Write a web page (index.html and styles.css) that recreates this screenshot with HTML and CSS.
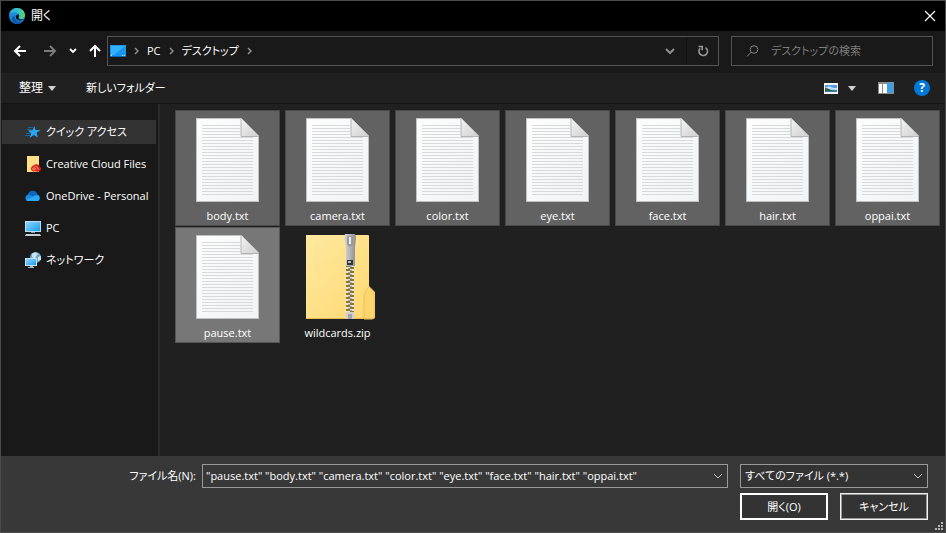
FILE: index.html
```html
<!DOCTYPE html>
<html lang="ja">
<head>
<meta charset="utf-8">
<title>開く</title>
<link rel="stylesheet" href="styles.css">
</head>
<body>

<!-- shared icons -->
<svg class="sprite" aria-hidden="true">
    <defs>
        <linearGradient id="paper" x1="0" y1="0" x2="1" y2="1">
            <stop offset="0" stop-color="#fdfdfd"/><stop offset="1" stop-color="#f1f3f5"/>
        </linearGradient>
        <linearGradient id="fold" x1="0" y1="0" x2="1" y2="1">
            <stop offset="0" stop-color="#f4f4f4"/><stop offset="1" stop-color="#cfcfcf"/>
        </linearGradient>
        <linearGradient id="folder" x1="0" y1="0" x2="1" y2="1">
            <stop offset="0" stop-color="#ffe9a0"/><stop offset="1" stop-color="#fdd870"/>
        </linearGradient>
        <linearGradient id="metal" x1="0" y1="0" x2="1" y2="0">
            <stop offset="0" stop-color="#d8d8d8"/><stop offset="0.5" stop-color="#b4b4b4"/><stop offset="1" stop-color="#8c8c8c"/>
        </linearGradient>
        <linearGradient id="screen" x1="0" y1="0" x2="1" y2="1">
            <stop offset="0" stop-color="#8fd6ff"/><stop offset="1" stop-color="#1b9cf0"/>
        </linearGradient>
        <linearGradient id="edgeBlue" x1="0" y1="0" x2="0" y2="1">
            <stop offset="0" stop-color="#1c9de0"/><stop offset="1" stop-color="#1473c8"/>
        </linearGradient>
        <linearGradient id="edgeTop" x1="0" y1="0" x2="1" y2="0">
            <stop offset="0" stop-color="#2aa8e8"/><stop offset="0.6" stop-color="#35c1c0"/><stop offset="1" stop-color="#62d65a"/>
        </linearGradient>
        <pattern id="ruled" width="3" height="3" patternUnits="userSpaceOnUse" y="7">
            <rect width="3" height="1" fill="#d7d9db"/>
        </pattern>
        <pattern id="teeth" width="8" height="4" patternUnits="userSpaceOnUse" x="40" y="34">
            <rect width="8" height="4" fill="#8a7433"/>
            <path d="M0 0h4v2H0zM4 2h4v2H4z" fill="#e4e4e4"/>
            <path d="M2 1h2v1H2zM4 3h2v1H4z" fill="#a9a9a4"/>
        </pattern>
    </defs>
    <symbol id="textFile" viewBox="0 0 64 85">
        <path d="M0 0h45l18 18v66H0z" fill="#bfc1c3"/>
        <path d="M1 1h44l17 17v65H1z" fill="url(#paper)"/>
        <path d="M6 7h38v12h13v59H6z" fill="url(#ruled)"/>
        <path d="M45 0l18 18H45z" fill="url(#fold)"/>
        <path d="M45 0v18.500h18" fill="none" stroke="#b4b4b4"/>
    </symbol>
    <symbol id="chevronDown" viewBox="0 0 10 6">
        <path d="M1 1l4 4 4-4" fill="none" stroke="currentColor"/>
    </symbol>
    <symbol id="chevronRight" viewBox="0 0 5 8">
        <path d="M1 1l3 3-3 3" fill="none" stroke="#8f8f8f" stroke-width="1.5"/>
    </symbol>
</svg>

<div class="dialog">
    <div class="titleBar">
        <svg class="appIcon" viewBox="0 0 16 16">
            <circle cx="8" cy="8" r="8" fill="url(#edgeBlue)"/>
            <path d="M.2 6.300C1 2.600 4.200 0 8 0c4.600 0 8 3.400 8 7.200 0 2.300-1.600 3.900-3.800 3.900-1.500 0-2.700-.6-2.700-1.400 0-.5.700-.8.700-2C10.200 5.600 8 4.300 5.500 4.300 3 4.300 1.200 5.200.2 6.300z" fill="url(#edgeTop)"/>
            <path d="M5.600 7.500c-.8 4 2.600 6.800 6 6.200 1.200-.2 2.300-.8 3.100-1.500-1.200 2.200-3.600 3.800-6.600 3.800-3.300-.2-5.400-3-4.900-5.600.3-1.400 1.200-2.400 2.400-2.900z" fill="#1257a5"/>
            <path d="M9.500 6.600c-1.700-.1-2.900 1.200-2.600 2.900.3 2 2.700 3.300 5.200 2.800 1.100-.2 2-.6 2.700-1.200-2.400.8-5.300.2-5.300-1.400 0-.5.700-.8.700-2 0-.4-.3-.8-.7-1.100z" fill="#05131f"/>
        </svg>
        <div class="titleText">開く</div>
        <button class="iconBtn closeBtn" aria-label="閉じる">
            <svg width="12" height="12" viewBox="0 0 12 12"><path d="M1 1l10 10M11 1L1 11" stroke="#fff" stroke-width="1.200"/></svg>
        </button>
    </div>

    <div class="navBar">
        <div class="navButtons">
            <button class="iconBtn backBtn" aria-label="戻る">
                <svg width="14" height="12" viewBox="0 0 14 12"><path d="M13 6H2M7 1L2 6l5 5" fill="none" stroke="#fff" stroke-width="2"/></svg>
            </button>
            <button class="iconBtn" aria-label="進む" disabled>
                <svg width="14" height="12" viewBox="0 0 14 12"><path d="M1 6h11M7 1l5 5-5 5" fill="none" stroke="#7c7c7c" stroke-width="2"/></svg>
            </button>
            <button class="iconBtn" aria-label="最近表示した場所">
                <svg width="8" height="6" viewBox="0 0 8 6"><path d="M1 1l3 3 3-3" fill="none" stroke="#fff" stroke-width="1.800"/></svg>
            </button>
            <button class="iconBtn" aria-label="上へ">
                <svg width="12" height="14" viewBox="0 0 12 14"><path d="M6 13V2M1 7l5-5 5 5" fill="none" stroke="#fff" stroke-width="2"/></svg>
            </button>
        </div>
        <div class="addressBar">
            <svg width="16" height="12" viewBox="0 0 16 12"><rect width="16" height="12" fill="#1597f0"/><path d="M1 1h14L4 10H1z" fill="#35b0ff"/><path d="M0 11h16v1H0z" fill="#0768b8"/><path d="M1 10h1v1H1zM12 10h1v1h-1zM14 10h1v1h-1z" fill="#fff"/></svg>
            <svg class="crumbArrow"><use href="#chevronRight"/></svg>
            <a href="#pc">PC</a>
            <svg class="crumbArrow"><use href="#chevronRight"/></svg>
            <a href="#desktop">デスクトップ</a>
            <svg class="crumbArrow"><use href="#chevronRight"/></svg>
            <button class="iconBtn historyBtn" aria-label="以前の場所">
                <svg width="10" height="7" viewBox="0 0 10 7"><path d="M1 1l4 4 4-4" fill="none" stroke="#8f8f8f" stroke-width="2"/></svg>
            </button>
            <button class="iconBtn refreshBtn" aria-label="最新の情報に更新">
                <svg width="12" height="12" viewBox="0 0 12 12"><path d="M8.500 2.600A4.300 4.300 0 1 1 3 3.400" fill="none" stroke="#999" stroke-width="1.600"/><path d="M1.500 1.500h3.700v3.700" fill="none" stroke="#999" stroke-width="1.600"/></svg>
            </button>
        </div>
        <label class="searchBox">
            <svg width="13" height="12" viewBox="0 0 13 12"><circle cx="8" cy="4.500" r="3.800" fill="none" stroke="#858585"/><path d="M5.200 7.200L1 11.500" stroke="#858585"/></svg>
            <input type="text" placeholder="デスクトップの検索" aria-label="デスクトップの検索">
        </label>
    </div>

    <div class="toolBar">
        <button class="toolBtn organizeBtn">整理 <span class="caret"></span></button>
        <button class="toolBtn">新しいフォルダー</button>
        <div class="toolRight">
            <button class="iconBtn" aria-label="表示方法の変更">
                <svg width="14" height="11" viewBox="0 0 14 11"><rect width="14" height="11" fill="#f4f4f4"/><rect x="1" y="2" width="12" height="7" fill="#5b9be2"/><path d="M1 5c2-1 4-2 6-1s3 1 6 1v2H1z" fill="#c5e3f8"/><path d="M1 6c3 0 6 1 12 1v2H1z" fill="#3a78a8"/><path d="M1 5c3 0 4 1 7 3H1z" fill="#2d6245"/></svg>
            </button>
            <button class="iconBtn viewMore" aria-label="その他のオプション"><span class="caret"></span></button>
            <button class="iconBtn paneBtn" aria-label="プレビュー ウィンドウ">
                <svg width="16" height="12" viewBox="0 0 16 12"><rect width="16" height="12" fill="#8c8c8c"/><path d="M1 2h3v9H1zM5 2h4v9H5z" fill="#fff"/><path d="M9 1h6v10H9z" fill="#3d9ee8"/><path d="M12 0h1v1h-1zM14 0h1v1h-1z" fill="#4aa7f0"/></svg>
            </button>
            <button class="helpBtn" aria-label="ヘルプ">?</button>
        </div>
    </div>

    <div class="content">
        <div class="sidebar">
            <a class="sideItem activeItem" href="#quick">
                <svg viewBox="0 0 16 16"><path d="M9.500 2l1 4 5 .1-3.900 2.600 1.300 4.800-4-2.500-4.400 3 1.700-4.600L3 6.500l4.600-.4z" fill="#2aa5f2"/><path d="M3 3.500h5M2 5.500h4M1 9.500h4M0 11.500h5" stroke="#1767a3"/></svg>
                クイック アクセス
            </a>
            <a class="sideItem" href="#creative">
                <svg viewBox="0 0 16 16"><path d="M2 0h12v16H2z" fill="#ffe08a"/><path d="M12 9h2v7h-2z" fill="#f2bd4b"/><path d="M8.500 15.500a2.900 2.900 0 0 1-.3-5.700 3.700 3.700 0 0 1 6.500 1 2.500 2.500 0 0 1-1.200 4.700z" fill="#e3180c"/><path d="M11.500 13.500L9.500 12a1.100 1.100 0 1 0-.8 2h1.500M9.500 11c1.500-1.300 3-.3 3.200 1.200.2 1.300 1 1.500 1.300.8" fill="none" stroke="#ffd5b8" stroke-width=".8"/></svg>
                Creative Cloud Files
            </a>
            <a class="sideItem" href="#onedrive">
                <svg viewBox="0 0 16 16"><path d="M3.300 12A3.200 3.200 0 0 1 3 6a5 5 0 0 1 9.500.3A3.200 3.200 0 0 1 13 12z" fill="#0967bd"/><path d="M3.500 13A3.200 3.200 0 0 1 1 8c2-1.500 4-1 5.500-.2L14 12z" fill="#168be0"/><path d="M3.500 13c-1 0-2-.4-2.600-1.100l7.500-3.400a4 4 0 0 1 4-1.200A3 3 0 0 1 13 13z" fill="#2ba8f3"/></svg>
                OneDrive - Personal
            </a>
            <a class="sideItem" href="#thispc">
                <svg viewBox="0 0 16 16"><rect y="1" width="16" height="11" fill="#b9dff2"/><rect x="1" y="2" width="14" height="9" fill="url(#screen)"/><path d="M6 12h4v1H6z" fill="#7f9dad"/><path d="M1 14h14l1 2H0z" fill="#c7ced2"/></svg>
                PC
            </a>
            <a class="sideItem" href="#network">
                <svg viewBox="0 0 16 16"><circle cx="10.500" cy="5.500" r="5.500" fill="#6fa9c9"/><path d="M7 2c2-2 5-2 6 0l-2 2-1 3-3-2zM13 5l3-1v4l-3 1z" fill="#c9e5ef"/><path d="M0 6h12v8H0z" fill="#c2e6f7"/><path d="M1 7h10v6H1z" fill="url(#screen)"/><path d="M5 14h3v1h1v1H3v-1h2z" fill="#a7bcc6"/></svg>
                ネットワーク
            </a>
        </div>

        <div class="fileArea">
            <button class="fileItem selected"><svg><use href="#textFile"/></svg>body.txt</button>
            <button class="fileItem selected"><svg><use href="#textFile"/></svg>camera.txt</button>
            <button class="fileItem selected"><svg><use href="#textFile"/></svg>color.txt</button>
            <button class="fileItem selected"><svg><use href="#textFile"/></svg>eye.txt</button>
            <button class="fileItem selected"><svg><use href="#textFile"/></svg>face.txt</button>
            <button class="fileItem selected"><svg><use href="#textFile"/></svg>hair.txt</button>
            <button class="fileItem selected"><svg><use href="#textFile"/></svg>oppai.txt</button>
            <button class="fileItem selected focused"><svg><use href="#textFile"/></svg>pause.txt</button>
            <button class="fileItem">
                <svg class="zipIcon" viewBox="-6 0 76 87">
                    <path d="M0 2h62q1 0 1 1v50l6 6v25q0 2-2 2H0z" fill="url(#folder)"/>
                    <path d="M58 86V60l5-6 5 5v25q0 2-2 2z" fill="#fdd56c" stroke="#eec25a"/>
                    <path d="M0 85h67v1H0z" fill="#e6bd56"/>
                    <rect x="40" y="32" width="8" height="47" fill="url(#teeth)"/>
                    <path d="M39 1h10l1 3-1 10v19h-9V14L38 4z" fill="url(#metal)"/>
                    <path d="M41 4q0-1 1-1h4q1 0 1 1v8q-3 3-6 0z" fill="#9a9a9a"/>
                    <path d="M43 4h2v7h-2z" fill="#eee"/>
                    <path d="M41 27h6v5h-6z" fill="#333"/><path d="M42 28h3v2h-3z" fill="#bbb"/>
                    <path d="M40 79h8v7h-8z" fill="#d0d0d0"/><path d="M42 81h4v5h-4z" fill="#a6a6a6"/>
                </svg>wildcards.zip
            </button>
        </div>
    </div>

    <div class="footer">
        <label class="nameLabel" for="fileName">ファイル名(N):</label>
        <div class="nameBox">
            <input type="text" id="fileName" value="&quot;pause.txt&quot; &quot;body.txt&quot; &quot;camera.txt&quot; &quot;color.txt&quot; &quot;eye.txt&quot; &quot;face.txt&quot; &quot;hair.txt&quot; &quot;oppai.txt&quot;">
            <button class="iconBtn" aria-label="履歴を表示">
                <svg class="comboArrow"><use href="#chevronDown"/></svg>
            </button>
        </div>
        <div class="typeBox">
            <select aria-label="ファイルの種類">
                <option>すべてのファイル (*.*)</option>
            </select>
            <svg class="comboArrow"><use href="#chevronDown"/></svg>
        </div>
        <div class="buttonRow">
            <button class="openBtn">開く(O)</button>
            <button class="cancelBtn">キャンセル</button>
        </div>
        <svg class="grip" width="8" height="8" viewBox="0 0 8 8"><path d="M6 0h2v2H6zM3 3h2v2H3zM6 3h2v2H6zM0 6h2v2H0zM3 6h2v2H3zM6 6h2v2H6z" fill="#b4b4b4"/></svg>
    </div>
</div>

</body>
</html>
```
FILE: styles.css
```css
*{
    box-sizing:border-box;
}
body{
    margin:0;
    background:#202020;
    color:#fff;
    font-family:"Open Sans", "Noto Sans CJK JP", sans-serif;
    font-size:11px;
    line-height:16px;
    font-feature-settings:"palt";
}
button, input, select{
    font:inherit;
    font-feature-settings:inherit;
    color:inherit;
    background:none;
    border:none;
    margin:0;
    padding:0;
    outline:none;
}
a{
    color:inherit;
    text-decoration:none;
}
svg{
    display:block;
    flex:none;
}
.sprite{
    position:absolute;
    width:0;
    height:0;
}
.dialog{
    display:flex;
    flex-direction:column;
    min-height:100vh;
    border:1px solid #4b4b4b;
}
.iconBtn{
    display:flex;
    align-items:center;
    justify-content:center;
}

/* title bar */
.titleBar{
    display:flex;
    align-items:center;
    height:30px;
    background:#000;
    padding:0 9px 0 8px;
}
.appIcon{
    width:16px;
    height:16px;
}
.titleText{
    flex:1;
    padding-left:6px;
    font-size:12px;
}

/* navigation */
.navBar{
    display:flex;
    align-items:center;
    height:42px;
    background:#191919;
    padding:0 12px 2px;
    gap:12px;
}
.navButtons{
    display:flex;
    align-items:center;
    gap:12px;
    margin-right:-6px;
}
.backBtn{
    margin-right:4px;
}
.addressBar{
    flex:1;
    display:flex;
    align-items:center;
    gap:8px;
    height:30px;
    border:1px solid #535353;
    padding-left:2px;
}
.crumbArrow{
    width:5px;
    height:8px;
}
.historyBtn{
    margin-left:auto;
    width:16px;
}
.refreshBtn{
    width:32px;
    height:28px;
    border-left:1px solid #111;
}
.searchBox{
    display:flex;
    align-items:center;
    gap:12px;
    width:202px;
    height:30px;
    border:1px solid #535353;
    padding:0 14px;
}
.searchBox input{
    flex:1;
    min-width:0;
}
.searchBox input::placeholder{
    color:#7d7d7d;
    opacity:1;
}

/* toolbar */
.toolBar{
    display:flex;
    align-items:center;
    gap:30px;
    height:31px;
    background:#202020;
    border-bottom:1px solid #161616;
    padding:0 15px 0 18px;
}
.toolBtn{
    display:flex;
    align-items:center;
    gap:5px;
}
.organizeBtn{
    font-size:12px;
}
.caret{
    border:4px solid transparent;
    border-top:5px solid #d0d0d0;
    border-bottom:0;
}
.toolRight{
    display:flex;
    align-items:center;
    margin-left:auto;
}
.viewMore{
    margin-left:10px;
}
.paneBtn{
    margin:0 20px 0 22px;
}
.helpBtn{
    width:16px;
    height:16px;
    border-radius:50%;
    background:#0078d7;
    font-size:12px;
    font-weight:bold;
    text-align:center;
}

/* folders and files */
.content{
    flex:1;
    display:flex;
}
.sidebar{
    width:159px;
    background:#191919;
    border-right:2px solid #2b2b2b;
    padding:16px 2px 0 1px;
}
.sideItem{
    display:flex;
    align-items:center;
    gap:5px;
    height:24px;
    margin-bottom:8px;
    padding-left:23px;
    white-space:nowrap;
}
.sideItem svg{
    width:16px;
    height:16px;
}
.activeItem{
    background:#333;
}
.fileArea{
    flex:1;
    display:grid;
    grid-template-columns:repeat(auto-fill, 105px);
    grid-auto-rows:116px;
    align-content:start;
    gap:1px 5px;
    padding:6px 0 0 15px;
}
.fileItem{
    display:flex;
    flex-direction:column;
    align-items:center;
    justify-content:flex-end;
    gap:5px;
    border:1px solid transparent;
    padding-bottom:1px;
}
.fileItem svg{
    width:64px;
    height:85px;
}
.fileItem .zipIcon{
    width:76px;
    height:87px;
}
.selected{
    background:#626262;
    border-color:#484848;
}
.focused{
    background:#777;
    border-color:#555;
}

/* file name row and buttons */
.footer{
    position:relative;
    display:grid;
    grid-template-columns:195px 1fr 188px;
    align-items:center;
    gap:5px 0;
    background:#383838;
    padding:8px 17px 12px 0;
}
.nameLabel{
    text-align:right;
}
.nameBox{
    display:flex;
    height:24px;
    margin:0 12px 0 6px;
    border:1px solid #999;
    background:#383838;
    padding:0 4px 0 3px;
}
.nameBox input{
    flex:1;
    min-width:0;
}
.typeBox{
    display:flex;
    align-items:center;
    height:24px;
    border:1px solid #999;
    background:#333;
    padding:0 4px;
}
.typeBox select{
    flex:1;
    min-width:0;
    appearance:none;
}
.comboArrow{
    width:10px;
    height:6px;
    color:#c0c0c0;
}
.buttonRow{
    grid-column:3;
    display:flex;
    justify-content:space-between;
}
.openBtn, .cancelBtn{
    width:88px;
    height:27px;
    background:#333;
    border:2px solid #fff;
}
.cancelBtn{
    border:1px solid #f0f0f0;
    outline:1px solid #999;
    outline-offset:-2px;
}
.grip{
    position:absolute;
    right:2px;
    bottom:2px;
}
```
